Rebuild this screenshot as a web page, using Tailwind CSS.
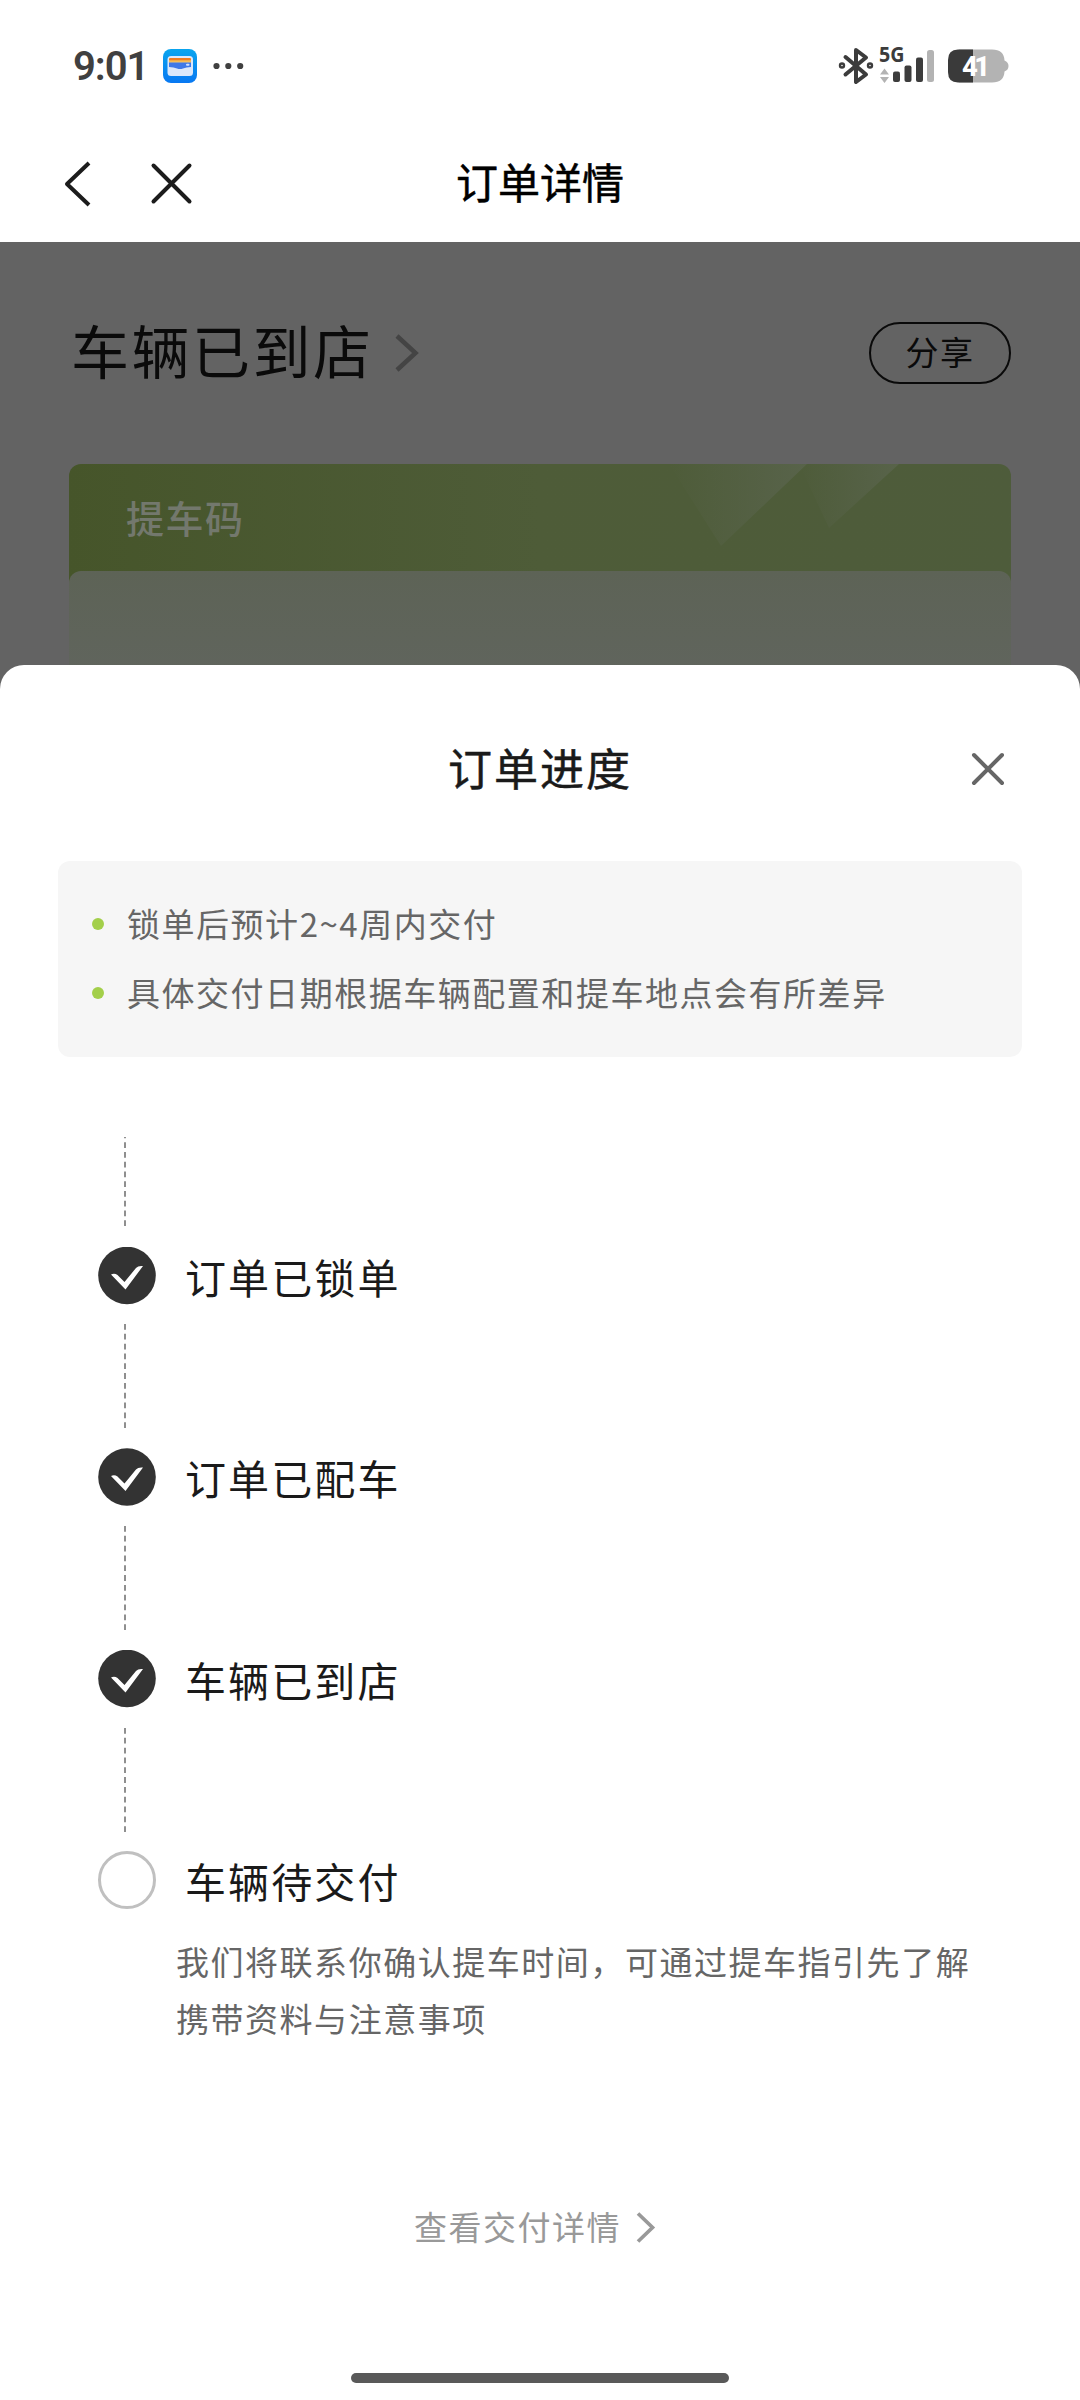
<!DOCTYPE html>
<html lang="zh-CN">
<head>
<meta charset="utf-8">
<title>订单详情</title>
<script src="https://cdn.jsdelivr.net/npm/@tailwindcss/browser@4"></script>
</head>
<body class="bg-white">
<div class="relative flex h-[2400px] w-[1080px] flex-col overflow-hidden bg-white font-['Noto_Sans_CJK_SC',sans-serif] text-[#1a1a1a]">

  <!-- status bar -->
  <div class="flex h-[124px] shrink-0 items-center pt-[8px] pr-[71px] pl-[73px]">
    <span class="w-[90px] pt-[2px] font-['Roboto',sans-serif] text-[40px] leading-[48px] font-semibold tracking-[-1px] text-[#404040]">9:01</span>
    <svg class="h-[34px] w-[34px]" viewBox="0 0 34 34">
      <defs><linearGradient id="w" x1="0" y1="0" x2="0" y2="1"><stop offset="0" stop-color="#0aa5ee"/><stop offset="1" stop-color="#0878f2"/></linearGradient></defs>
      <rect width="34" height="34" rx="8" fill="url(#w)"/>
      <rect x="4.500" y="7" width="25.500" height="20" rx="3.500" fill="#dce8fb"/>
      <rect x="6" y="9" width="22" height="3" rx="1" fill="#ef7d21"/>
      <rect x="6" y="11.300" width="22" height="2.500" fill="#f6bd55"/>
      <path d="M6 13.500h22v4.500q-5 0-8 1.500-3 1-6 0-3-1.500-8-1.500z" fill="#3f78e8"/>
      <rect x="23" y="14.800" width="3.500" height="2" rx="1" fill="#cfe0ff"/>
    </svg>
    <svg class="ml-[16px] h-[8px] w-[32px]" viewBox="0 0 32 8" fill="#404040"><circle cx="3.500" cy="4" r="3.100"/><circle cx="15.300" cy="4" r="3.100"/><circle cx="27.200" cy="4" r="3.100"/></svg>
    <div class="flex-1"></div>
    <svg class="h-[38px] w-[36px]" viewBox="0 0 36 38" fill="none" stroke="#3c3c3c" stroke-width="4" stroke-linejoin="round" stroke-linecap="round">
      <path d="M7.500 10 28 27.500 18 35V3l10 7.500L7.500 27.500"/><circle cx="4" cy="18.500" r="1.200"/><circle cx="32" cy="18.500" r="1.200"/>
    </svg>
    <svg class="ml-[4px] h-[38px] w-[56px] overflow-visible" viewBox="0 0 56 38">
      <text x="1" y="15" font-family="Noto Sans" font-weight="700" font-size="20.500" textLength="25.500" lengthAdjust="spacingAndGlyphs" fill="#3c3c3c">5G</text>
      <g fill="#b3b3b3"><path d="M6.500 21.500 11 27.500H2zM6.500 36 11 30H2z"/><rect x="49" y="3" width="7" height="32" rx="2.500"/></g>
      <g fill="#3c3c3c"><rect x="15" y="24.500" width="7" height="10.500" rx="2"/><rect x="26.500" y="18.500" width="7" height="16.500" rx="2"/><rect x="38" y="10.500" width="7" height="24.500" rx="2"/></g>
    </svg>
    <svg class="ml-[13px] h-[38px] w-[62px]" viewBox="0 0 62 38">
      <path d="M12 2.500h33q12 0 12.500 11 4 1.500 4 5.500t-4 5.500q-.5 11-12.500 11H12z" fill="#b3b3b3"/>
      <path d="M11 2.500h15v33H11Q1 35.500 1 25V13Q1 2.500 11 2.500z" fill="#3a3a3a"/>
      <text x="15" y="28.500" font-family="Roboto" font-weight="800" font-size="27.500" textLength="28" fill="#fff">41</text>
    </svg>
  </div>

  <!-- navigation bar -->
  <div class="relative flex h-[118px] shrink-0 items-center justify-center pb-[5px]">
    <svg class="absolute top-[36px] left-[60px] h-[48px] w-[140px]" viewBox="0 0 140 48" fill="none" stroke="#1c1c1c" stroke-width="4">
      <path d="M29 3 7 24l22 21" stroke-linejoin="round"/>
      <path d="m93.500 5.500 36 36M129.500 5.500 93.500 41.500" stroke-linecap="round"/>
    </svg>
    <h1 class="text-[42px] leading-[60px] text-black [-webkit-text-stroke:0.500px_#000]">订单详情</h1>
  </div>

  <!-- dimmed page -->
  <div class="h-[460px] shrink-0 bg-[#636363] px-[69px] pt-[80px]">
    <div class="flex h-[62px] items-center">
      <h2 class="ml-[2px] pb-[9px] text-[58px] leading-[62px] tracking-[2.500px] text-[#0a0a0a]">车辆已到店</h2>
      <svg class="ml-[19px] h-[40px] w-[30px]" viewBox="0 0 30 40" fill="none" stroke="#444" stroke-width="4.500"><path d="m4 3 18.500 17L4 37"/></svg>
      <div class="flex-1"></div>
      <div class="flex h-[62px] w-[142px] items-center justify-center rounded-full border-2 border-[#0a0a0a] pb-[4px] text-[33px] leading-[40px] tracking-[1.500px] text-[#0a0a0a]">分享</div>
    </div>
    <div class="relative mt-[80px] h-[240px] w-[942px] overflow-hidden rounded-[12px] bg-linear-to-r from-[#46552a] via-[#4e5c38] to-[#4e5c3b]">
      <svg class="absolute top-0 left-[600px] h-[107px] w-[260px]" viewBox="0 0 260 107">
        <defs>
          <linearGradient id="a" x1="0" y1="0" x2="1" y2="0"><stop offset="0" stop-color="#58634a" stop-opacity="0"/><stop offset="0.500" stop-color="#58634a" stop-opacity=".5"/><stop offset="1" stop-color="#58634a"/></linearGradient>
        </defs>
        <path d="M0 0H138L52 82z" fill="url(#a)"/><path d="M130 0H230L160 64z" fill="url(#a)"/>
      </svg>
      <div class="flex h-[107px] items-center pb-[2px] pl-[57px] text-[38px] leading-[50px] font-medium tracking-[1.500px] text-[#73786d]">提车码</div>
      <div class="relative h-[133px] rounded-t-[12px] bg-linear-to-b from-[#5d6356] to-[#61655f]"></div>
    </div>
  </div>

  <!-- progress sheet -->
  <section class="absolute inset-x-0 top-[665px] flex h-[1735px] flex-col rounded-t-[24px] bg-white">
    <div class="relative flex h-[196px] shrink-0 items-center justify-center pt-[7px]">
      <h2 class="text-[44px] leading-[60px] tracking-[2px] [-webkit-text-stroke:0.500px_#1a1a1a]">订单进度</h2>
      <svg class="absolute top-[84px] left-[968px] h-[40px] w-[40px]" viewBox="0 0 40 40" fill="none" stroke="#666" stroke-width="4" stroke-linecap="round"><path d="m6 6 28 28M34 6 6 34"/></svg>
    </div>
    <ul class="mx-[58px] flex h-[196px] shrink-0 flex-col rounded-[12px] bg-[#f6f6f6] pt-[28px] pl-[34px] text-[33px] leading-[60px] tracking-[1.530px] text-[#666]">
      <li class="flex h-[69px] items-center"><i class="mr-[23px] h-[12px] w-[12px] rounded-full bg-[#a3cf4a]"></i><span class="pb-[1px]">锁单后预计2~4周内交付</span></li>
      <li class="flex h-[69px] items-center"><i class="mr-[23px] h-[12px] w-[12px] rounded-full bg-[#a3cf4a]"></i><span class="pb-[1px]">具体交付日期根据车辆配置和提车地点会有所差异</span></li>
    </ul>

    <ol class="mt-[80px] flex shrink-0 flex-col pl-[98px] text-[41px] leading-[56px] tracking-[2.100px]">
      <li>
        <svg class="ml-[26px] h-[90px] w-[2px]" viewBox="0 0 2 90"><path d="M1 89V0" stroke="#8f8f8f" stroke-width="2" stroke-dasharray="5.800 3.950"/></svg>
        <div class="mt-[20px] flex h-[58px] items-center">
          <svg class="mr-[29px] h-[58px] w-[58px]" viewBox="0 0 58 58"><circle cx="29" cy="28.500" r="28.800" fill="#333"/><path d="M13 27.500q3.500-1.500 6.500.5l7 7L38 21q2-2.500 7-2L27.500 42.500z" fill="#fff"/></svg>
          <span>订单已锁单</span>
        </div>
      </li>
      <li class="mt-[19px]">
        <svg class="ml-[26px] h-[104px] w-[2px]" viewBox="0 0 2 104"><path d="M1 0v104" stroke="#8f8f8f" stroke-width="2" stroke-dasharray="5.800 4.020"/></svg>
        <div class="mt-[20px] flex h-[58px] items-center">
          <svg class="mr-[29px] h-[58px] w-[58px]" viewBox="0 0 58 58"><circle cx="29" cy="29" r="28.800" fill="#333"/><path d="M13 28q3.500-1.500 6.500.5l7 7L38 21.500q2-2.500 7-2L27.500 43z" fill="#fff"/></svg>
          <span>订单已配车</span>
        </div>
      </li>
      <li class="mt-[20px]">
        <svg class="ml-[26px] h-[104px] w-[2px]" viewBox="0 0 2 104"><path d="M1 0v104" stroke="#8f8f8f" stroke-width="2" stroke-dasharray="5.800 4.020"/></svg>
        <div class="mt-[20px] flex h-[58px] items-center">
          <svg class="mr-[29px] h-[58px] w-[58px]" viewBox="0 0 58 58"><circle cx="29" cy="28.500" r="28.800" fill="#333"/><path d="M13 27.500q3.500-1.500 6.500.5l7 7L38 21q2-2.500 7-2L27.500 42.500z" fill="#fff"/></svg>
          <span>车辆已到店</span>
        </div>
      </li>
      <li class="mt-[20px]">
        <svg class="ml-[26px] h-[104px] w-[2px]" viewBox="0 0 2 104"><path d="M1 0v104" stroke="#8f8f8f" stroke-width="2" stroke-dasharray="5.800 4.020"/></svg>
        <div class="mt-[19px] flex h-[58px] items-center">
          <div class="mr-[29px] h-[58px] w-[58px] rounded-full border-3 border-[#c0c0c0]"></div>
          <span class="pb-[1px]">车辆待交付</span>
        </div>
        <p class="mt-[24px] ml-[78px] w-[820px] text-[33px] leading-[57px] tracking-[1.530px] text-[#666]">我们将联系你确认提车时间，可通过提车指引先了解<br>携带资料与注意事项</p>
      </li>
    </ol>

    <a class="mt-[150px] ml-[414px] flex h-[60px] items-center text-[33px] leading-[60px] tracking-[1.500px] text-[#999]"><span class="pb-[2px]">查看交付详情</span>
      <svg class="ml-[13px] h-[34px] w-[24px]" viewBox="0 0 24 34" fill="none" stroke="#999" stroke-width="3.700"><path d="m4 3.500 14.500 14L4 31.500"/></svg>
    </a>
    <div class="absolute bottom-[17px] left-[351px] h-[10px] w-[378px] rounded-full bg-[#595959]"></div>
  </section>
</div>
</body>
</html>
